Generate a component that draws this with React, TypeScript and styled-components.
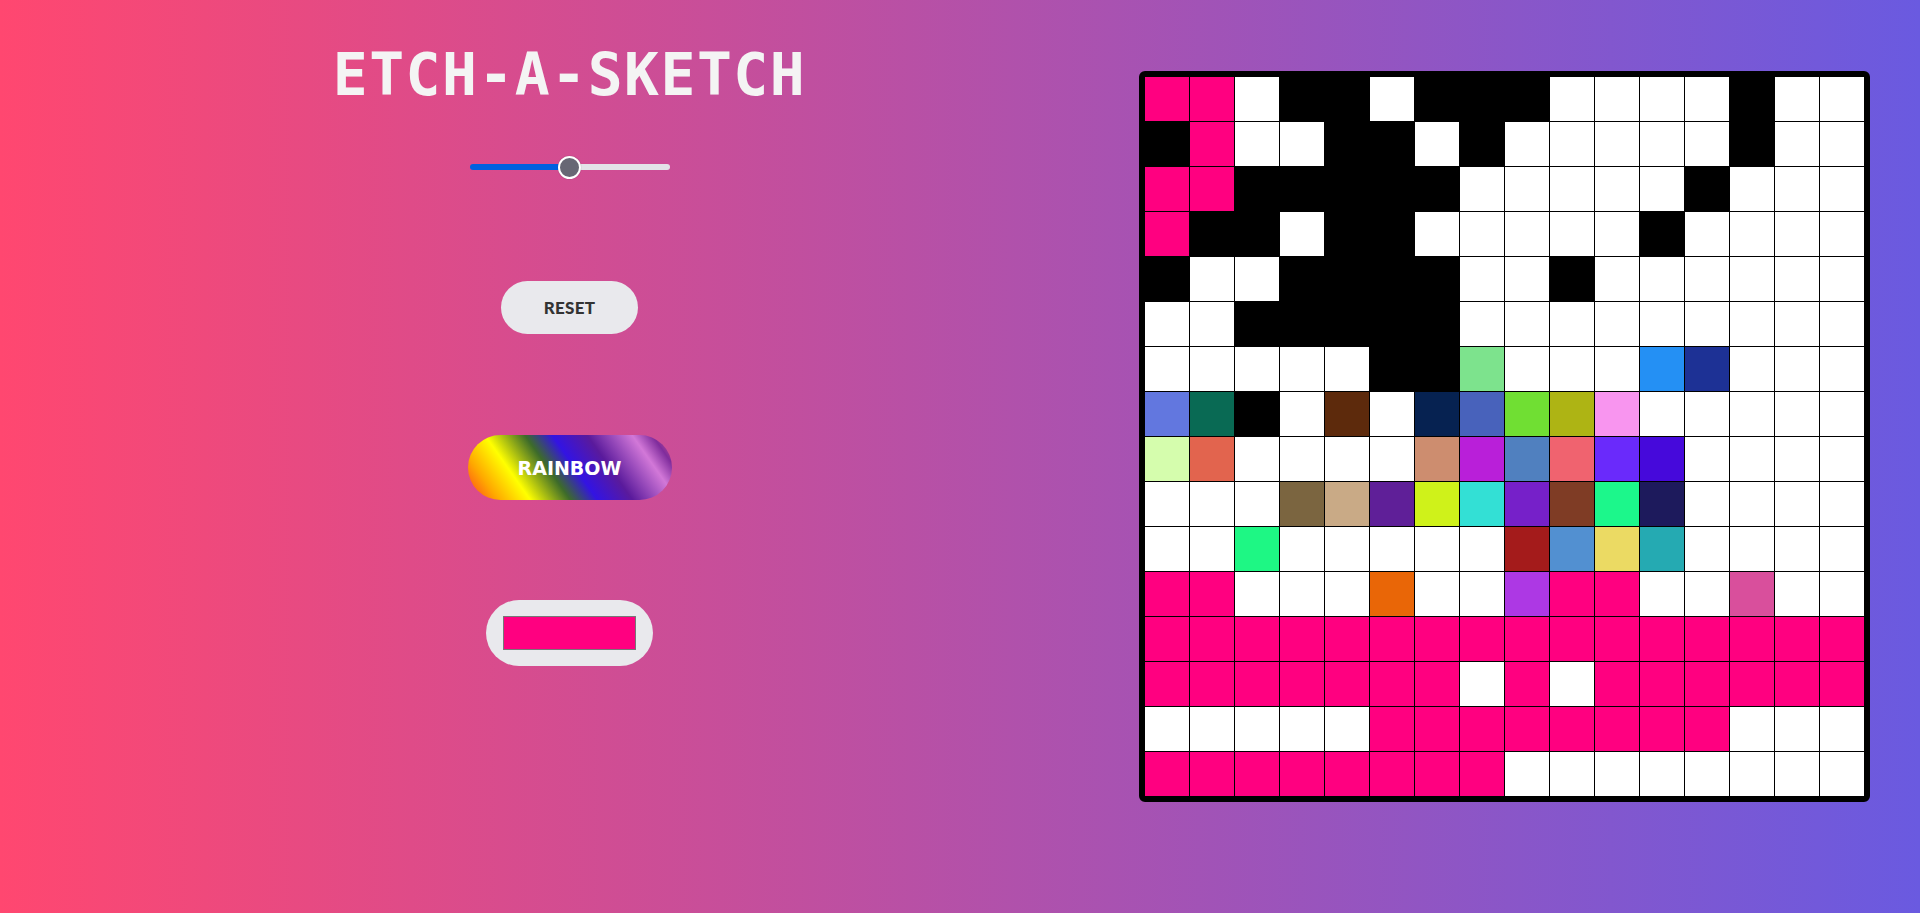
import React, { useState } from "react";
import styled, { createGlobalStyle } from "styled-components";

const GlobalStyle = createGlobalStyle`
  html, body { margin: 0; padding: 0; }
  body {
    min-height: 913px;
    background: linear-gradient(90deg, #ff4770 0%, #6a5ae0 100%);
    font-family: "DejaVu Sans", Verdana, sans-serif;
  }
`;

const Page = styled.main`
  display: flex;
  align-items: flex-start;
  min-height: 913px;
  padding-right: 50px;
  box-sizing: border-box;
`;

const Controls = styled.section`
  flex: 1;
  display: flex;
  flex-direction: column;
  align-items: center;
`;

const Title = styled.h1`
  margin: 46px 0 0;
  font-family: "DejaVu Sans Mono", "Liberation Mono", monospace;
  font-weight: 700;
  font-size: 58px;
  line-height: 58px;
  color: #f4f4f4;
  letter-spacing: 1.5px;
`;

const Slider = styled.input`
  -webkit-appearance: none;
  appearance: none;
  margin: 51px 0 0;
  width: 200px;
  height: 24px;
  background: transparent;
  cursor: pointer;

  &::-webkit-slider-runnable-track {
    height: 6px;
    border-radius: 3px;
    background: linear-gradient(
      90deg,
      #0060df 0%,
      #0060df var(--fill),
      #e3e3e8 var(--fill),
      #e3e3e8 100%
    );
  }
  &::-webkit-slider-thumb {
    -webkit-appearance: none;
    appearance: none;
    width: 23px;
    height: 23px;
    margin-top: -8.5px;
    border-radius: 50%;
    background: #676774;
    border: 2px solid #ffffff;
    box-sizing: border-box;
    box-shadow: 0 0 1px rgba(0, 0, 0, 0.4);
  }
`;

const PillButton = styled.button<{ $top: number; $w: number; $h: number }>`
  margin-top: ${(p) => p.$top}px;
  width: ${(p) => p.$w}px;
  height: ${(p) => p.$h}px;
  border: none;
  border-radius: ${(p) => p.$h / 2}px;
  background: #e9e9ed;
  color: #333333;
  font-family: Lato, "Liberation Sans", sans-serif;
  font-weight: 900;
  font-size: 17px;
  letter-spacing: 0.3px;
  cursor: pointer;
`;

const RainbowButton = styled(PillButton)`
  background: linear-gradient(
    55deg,
    #ff3d1f 0%,
    #ffa800 12%,
    #ffff00 25%,
    #3d6b2a 41%,
    #3313e3 52%,
    #5a1a9c 66%,
    #d278d8 84%,
    #7f2c9c 92%,
    #e85a8c 100%
  );
  color: #ffffff;
  font-family: "DejaVu Sans", Verdana, sans-serif;
  font-weight: 700;
  font-size: 19px;
  letter-spacing: 0;
`;

const ColorPicker = styled.input`
  -webkit-appearance: none;
  appearance: none;
  margin-top: 100px;
  width: 167px;
  height: 66px;
  padding: 16px 17px;
  box-sizing: border-box;
  border: none;
  border-radius: 33px;
  background: #e9e9ed;
  cursor: pointer;

  &::-webkit-color-swatch-wrapper {
    padding: 0;
  }
  &::-webkit-color-swatch {
    border: 1px solid #777777;
    border-radius: 0;
  }
`;

const Board = styled.div`
  margin-top: 71px;
  display: grid;
  grid-template-columns: repeat(16, 44px);
  grid-auto-rows: 44px;
  gap: 1px;
  border: 6px solid #000000;
  border-radius: 6px;
  background: #000000;
`;

const Cell = styled.div<{ $c: string }>`
  background: ${(p) => p.$c};
`;

const P = "#ff0080";
const W = "#ffffff";
const K = "#000000";

const INITIAL: string[][] = [
  [P, P, W, K, K, W, K, K, K, W, W, W, W, K, W, W],
  [K, P, W, W, K, K, W, K, W, W, W, W, W, K, W, W],
  [P, P, K, K, K, K, K, W, W, W, W, W, K, W, W, W],
  [P, K, K, W, K, K, W, W, W, W, W, K, W, W, W, W],
  [K, W, W, K, K, K, K, W, W, K, W, W, W, W, W, W],
  [W, W, K, K, K, K, K, W, W, W, W, W, W, W, W, W],
  [W, W, W, W, W, K, K, "#7de38d", W, W, W, "#2490f4", "#1d3195", W, W, W],
  ["#6277df", "#096a54", K, W, "#5d2a0c", W, "#062251", "#4862bb", "#70df33", "#aeb414", "#f895ef", W, W, W, W, W],
  ["#d5fdad", "#e2644e", W, W, W, W, "#cd8d6f", "#b91fd9", "#5080bf", "#f0636f", "#6a2afb", "#4609db", W, W, W, W],
  [W, W, W, "#7b6540", "#c9aa86", "#5f1f98", "#cff21a", "#33e0d5", "#7620c9", "#7f3c25", "#1cf78b", "#1d1a5c", W, W, W, W],
  [W, W, "#1ef784", W, W, W, W, W, "#a41b1b", "#5290d1", "#ebda63", "#25aab2", W, W, W, W],
  [P, P, W, W, W, "#e96607", W, W, "#ad38e4", P, P, W, W, "#d94f9c", W, W],
  [P, P, P, P, P, P, P, P, P, P, P, P, P, P, P, P],
  [P, P, P, P, P, P, P, W, P, W, P, P, P, P, P, P],
  [W, W, W, W, W, P, P, P, P, P, P, P, P, W, W, W],
  [P, P, P, P, P, P, P, P, W, W, W, W, W, W, W, W],
];

const randomColor = () =>
  "#" +
  Math.floor(Math.random() * 0xffffff)
    .toString(16)
    .padStart(6, "0");

export default function App() {
  const [size, setSize] = useState(16);
  const [color, setColor] = useState("#ff0080");
  const [rainbow, setRainbow] = useState(false);
  const [cells, setCells] = useState<string[][]>(INITIAL);

  const fill = ((size - 2) / (30 - 2)) * 100;

  const paint = (r: number, c: number) => {
    setCells((prev) =>
      prev.map((row, ri) =>
        ri === r
          ? row.map((v, ci) => (ci === c ? (rainbow ? randomColor() : color) : v))
          : row
      )
    );
  };

  const reset = () => setCells(INITIAL.map((row) => row.map(() => W)));

  return (
    <>
      <GlobalStyle />
      <Page>
        <Controls>
          <Title>ETCH-A-SKETCH</Title>
          <Slider
            type="range"
            min={2}
            max={30}
            value={size}
            onChange={(e) => setSize(Number(e.target.value))}
            style={{ ["--fill" as string]: `${fill}%` } as React.CSSProperties}
          />
          <PillButton $top={102} $w={137} $h={53} onClick={reset}>
            RESET
          </PillButton>
          <RainbowButton $top={101} $w={204} $h={65} onClick={() => setRainbow((v) => !v)}>
            RAINBOW
          </RainbowButton>
          <ColorPicker
            type="color"
            value={color}
            onChange={(e) => {
              setColor(e.target.value);
              setRainbow(false);
            }}
          />
        </Controls>
        <Board>
          {cells.map((row, r) =>
            row.map((c, ci) => (
              <Cell key={`${r}-${ci}`} $c={c} onMouseEnter={() => paint(r, ci)} />
            ))
          )}
        </Board>
      </Page>
    </>
  );
}
